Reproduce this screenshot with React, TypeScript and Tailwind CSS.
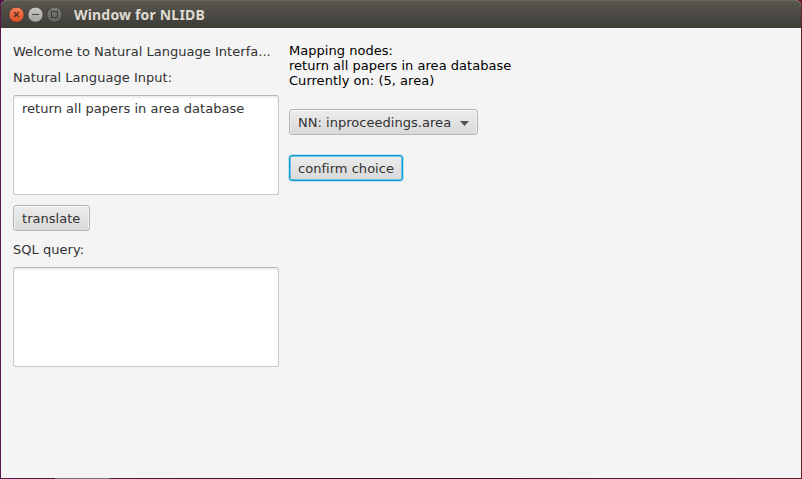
import React from "react";

function WindowControls() {
  return (
    <svg width="56" height="18" viewBox="0 0 56 18" fill="none">
      <defs>
        <linearGradient id="close" x1="0" y1="0" x2="0" y2="1">
          <stop offset="0" stopColor="#f5805a" />
          <stop offset="1" stopColor="#e2501f" />
        </linearGradient>
        <linearGradient id="minimize" x1="0" y1="0" x2="0" y2="1">
          <stop offset="0" stopColor="#c9c7c5" />
          <stop offset="1" stopColor="#a5a3a2" />
        </linearGradient>
        <linearGradient id="maximize" x1="0" y1="0" x2="0" y2="1">
          <stop offset="0" stopColor="#7d7c77" />
          <stop offset="1" stopColor="#605f5a" />
        </linearGradient>
      </defs>
      <circle cx="8.5" cy="8.7" r="7.6" fill="url(#close)" stroke="#3a3834" strokeWidth="0.8" />
      <path d="M6 6l5 5M11 6l-5 5" stroke="#4b2d20" strokeWidth="1.2" />
      <circle cx="27.5" cy="8.7" r="7.6" fill="url(#minimize)" stroke="#3a3834" strokeWidth="0.8" />
      <path d="M24 8.5h7" stroke="#45443f" />
      <circle cx="46.5" cy="8.7" r="7.6" fill="url(#maximize)" stroke="#3a3834" strokeWidth="0.8" />
      <rect x="43.5" y="5.5" width="6" height="6" stroke="#3d3c38" />
    </svg>
  );
}

const buttonClass =
  "flex h-[26px] items-center rounded-[3px] border border-[#b5b5b5] bg-linear-to-b from-[#ececec] to-[#d9d9d9] px-2 pt-[2px] whitespace-nowrap shadow-[inset_0_1px_0_#f8f8f8,inset_1px_0_0_#eeeeee,inset_-1px_0_0_#eeeeee]";

const areaClass =
  "block w-[266px] h-[100px] resize-none rounded-[3px] border border-[#c8c8c8] border-t-[#b5b5b5] bg-white px-2 pt-[5px] leading-[15px] tracking-[0.03px] shadow-[inset_0_2px_3px_-1px_#e2e2e2] outline-none";

export default function App() {
  return (
    <div className="h-[479px] w-[802px] overflow-hidden bg-linear-to-r from-[#56164a] via-[#3a0825] to-[#6b1d30] px-px pb-px font-['DejaVu_Sans',sans-serif] text-[13px] tracking-[0.03px] text-[#323232]">
      <div className="flex h-[478px] flex-col overflow-hidden rounded-t-[6px] bg-[#f4f4f4]">
        <header className="flex h-7 shrink-0 items-center border-t border-[#67655c] bg-linear-to-b from-[#59574f] to-[#3d3c37] pl-[7px]">
          <WindowControls />
          <h1 className="ml-[10px] font-['Noto_Sans',sans-serif] text-[14px] leading-5 font-bold tracking-[0.18px] whitespace-nowrap text-[#dfdbd2]">
            Window for NLIDB
          </h1>
        </header>
        <main className="flex flex-1 gap-[10px] pl-3">
          <section className="flex w-[266px] flex-col items-start pt-4">
            <p className="leading-[15px] whitespace-nowrap">Welcome to Natural Language Interfa...</p>
            <label htmlFor="nl-input" className="mt-[11px] leading-[15px]">Natural Language Input:</label>
            <textarea id="nl-input" spellCheck={false} defaultValue="return all papers in area database" className={`${areaClass} mt-[10px]`} />
            <button className={`${buttonClass} mt-[10px] w-[77px]`}>translate</button>
            <label htmlFor="sql" className="mt-[11px] leading-[15px]">SQL query:</label>
            <textarea id="sql" className={`${areaClass} mt-[10px]`} />
          </section>
          <section className="flex flex-col items-start pt-[15px]">
            <p className="leading-[15px] whitespace-nowrap text-black">
              Mapping nodes:
              <br />
              return all papers in area database
              <br />
              Currently on: (5, area)
            </p>
            <button className={`${buttonClass} mt-[21px] w-[189px] justify-between`}>
              NN: inproceedings.area
              <svg width="9" height="5" viewBox="0 0 9 5">
                <path d="M0 0h9L4.5 5z" fill="#505050" />
              </svg>
            </button>
            <button className="mt-5 flex h-[26px] w-[114px] items-center rounded-[3px] border border-[#039ed3] bg-linear-to-b from-[#ececec] to-[#d9d9d9] px-2 pt-[2px] whitespace-nowrap shadow-[0_0_0_1px_#bde2f0,inset_0_0_0_0.5px_#039ed3]">
              confirm choice
            </button>
          </section>
        </main>
      </div>
      <div className="ml-[54px] h-px w-[55px] bg-[#737373]" />
    </div>
  );
}
